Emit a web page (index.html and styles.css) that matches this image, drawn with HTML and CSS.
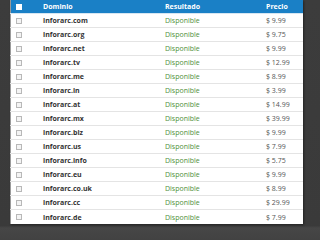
FILE: index.html
```html
<!DOCTYPE html>
<html>
<head>
<meta name="viewport" content="width=device-width, initial-scale=1">
<link rel="stylesheet" href="styles.css">
</head>
<body>

<div class="slide">
  <table class="results">
    <thead>
      <tr>
        <th class="chk"><span class="box on"></span></th>
        <th class="dom">Dominio</th>
        <th class="res">Resultado</th>
        <th class="pre">Precio</th>
      </tr>
    </thead>
    <tbody>
      <tr><td class="chk"><span class="box"></span></td><td class="dom">inforarc.com</td><td class="res">Disponible</td><td class="pre">$ 9.99</td></tr>
      <tr><td class="chk"><span class="box"></span></td><td class="dom">inforarc.org</td><td class="res">Disponible</td><td class="pre">$ 9.75</td></tr>
      <tr><td class="chk"><span class="box"></span></td><td class="dom">inforarc.net</td><td class="res">Disponible</td><td class="pre">$ 9.99</td></tr>
      <tr><td class="chk"><span class="box"></span></td><td class="dom">inforarc.tv</td><td class="res">Disponible</td><td class="pre">$ 12.99</td></tr>
      <tr><td class="chk"><span class="box"></span></td><td class="dom">inforarc.me</td><td class="res">Disponible</td><td class="pre">$ 8.99</td></tr>
      <tr><td class="chk"><span class="box"></span></td><td class="dom">inforarc.in</td><td class="res">Disponible</td><td class="pre">$ 3.99</td></tr>
      <tr><td class="chk"><span class="box"></span></td><td class="dom">inforarc.at</td><td class="res">Disponible</td><td class="pre">$ 14.99</td></tr>
      <tr><td class="chk"><span class="box"></span></td><td class="dom">inforarc.mx</td><td class="res">Disponible</td><td class="pre">$ 39.99</td></tr>
      <tr><td class="chk"><span class="box"></span></td><td class="dom">inforarc.biz</td><td class="res">Disponible</td><td class="pre">$ 9.99</td></tr>
      <tr><td class="chk"><span class="box"></span></td><td class="dom">inforarc.us</td><td class="res">Disponible</td><td class="pre">$ 7.99</td></tr>
      <tr><td class="chk"><span class="box"></span></td><td class="dom">inforarc.info</td><td class="res">Disponible</td><td class="pre">$ 5.75</td></tr>
      <tr><td class="chk"><span class="box"></span></td><td class="dom">inforarc.eu</td><td class="res">Disponible</td><td class="pre">$ 9.99</td></tr>
      <tr><td class="chk"><span class="box"></span></td><td class="dom">inforarc.co.uk</td><td class="res">Disponible</td><td class="pre">$ 8.99</td></tr>
      <tr><td class="chk"><span class="box"></span></td><td class="dom">inforarc.cc</td><td class="res">Disponible</td><td class="pre">$ 29.99</td></tr>
      <tr><td class="chk"><span class="box"></span></td><td class="dom">inforarc.de</td><td class="res">Disponible</td><td class="pre">$ 7.99</td></tr>
    </tbody>
  </table>
</div>

</body>
</html>
```

FILE: styles.css
```css
body {
    margin: 0;
    background-color: #3a3a3a;
    font-family: "Open Sans", "Liberation Sans", sans-serif;
}

/* dark slide background */
.slide {
    width: 320px;
    height: 240px;
    background: linear-gradient(to bottom, #3c3c3c 0%, #3a3a3a 94%, #464646 95%, #424242 100%);
    padding-left: 10px;
    box-sizing: border-box;
}

/* The results table */
.results {
    width: 293px;
    border-collapse: collapse;
    background-color: #fff;
    border-left: 1px solid #9a9a9a;
    table-layout: fixed;
    box-shadow: 1px 1px 2px rgba(0,0,0,0.4);
}

.results th {
    background-color: #1a80c6;
    color: #fff;
    font-size: 7px;
    font-weight: bold;
    text-align: left;
    height: 13px;
    padding: 0;
    border-bottom: 1px solid #d6e6f2;
}

.results td {
    font-size: 7px;
    height: 13px;
    padding: 0;
    border-bottom: 1px solid #e4e4e4;
    color: #444;
}

.results tr:last-child td {
    border-bottom: none;
    height: 14px;
}

.chk {
    width: 32px;
}

.dom {
    width: 122px;
}

.res {
    width: 101px;
}

td.dom {
    font-weight: bold;
    color: #333;
}

td.res {
    color: #4e8f3a;
}

td.pre {
    color: #555;
}

/* little checkbox squares */
.box {
    display: block;
    width: 4px;
    height: 4px;
    margin-left: 5px;
    border: 1px solid #b8b8b8;
    background-color: #f4f4f4;
}

.box.on {
    border-color: #fff;
    background-color: #fff;
}
```
